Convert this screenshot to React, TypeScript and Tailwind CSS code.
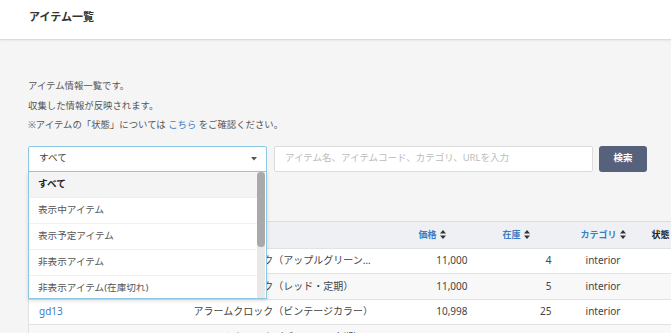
import React from "react";

const font = { fontFamily: '"Noto Sans", "Noto Sans CJK JP", sans-serif' };

const options = [
  "すべて",
  "表示中アイテム",
  "表示予定アイテム",
  "非表示アイテム",
  "非表示アイテム(在庫切れ)",
];

const rows = [
  { code: "gd11", name: "アラームクロック（アップルグリーン・定期）", price: "11,000", stock: 4, category: "interior" },
  { code: "gd12", name: "アラームクロック（レッド・定期）", price: "11,000", stock: 5, category: "interior" },
  { code: "gd13", name: "アラームクロック（ビンテージカラー）", price: "10,998", stock: 25, category: "interior" },
  { code: "gd14", name: "アラームクロック（ゴールド・定期）", price: "11,000", stock: 3, category: "interior" },
];

function SortIcon() {
  return (
    <svg width="6" height="9" viewBox="0 0 6 9" className="inline-block ml-[3px] -mt-[1px]">
      <path d="M3 0 L6 3.6 L0 3.6 Z" fill="#333" />
      <path d="M3 9 L6 5.4 L0 5.4 Z" fill="#333" />
    </svg>
  );
}

export default function App() {
  return (
    <div className="min-h-[333px] bg-[#f5f5f5] text-[#555]" style={font}>
      {/* Header */}
      <header className="h-[40px] bg-white border-b border-[#dcdcdc] shadow-[0_1px_2px_rgba(0,0,0,0.06)] flex items-center px-[29px]">
        <h1 className="text-[11px] font-bold text-[#333] -mt-[4px]">アイテム一覧</h1>
      </header>

      <div className="pt-[36px] pl-[28px]">
        {/* Intro */}
        <div className="text-[9.4px] leading-[19.5px]">
          <p>アイテム情報一覧です。</p>
          <p>収集した情報が反映されます。</p>
          <p>
            ※アイテムの「状態」については <span className="text-[#3b7dc4]">こちら</span> をご確認ください。
          </p>
        </div>

        {/* Search row */}
        <div className="mt-[11px] flex items-center gap-[7px]">
          <div className="relative w-[239px]">
            <div className="h-[26px] bg-white border border-[#8cc8e3] rounded-t-[2px] flex items-center justify-between pl-[10px] pr-[9px] text-[9.6px] text-[#444]">
              <span>すべて</span>
              <svg width="6" height="4" viewBox="0 0 6 4">
                <path d="M0 0 L6 0 L3 3.5 Z" fill="#555" />
              </svg>
            </div>
            {/* Dropdown menu */}
            <div className="absolute left-0 top-[25px] z-10 w-[239px] h-[128px] bg-white border border-[#8cc8e3] shadow-[0_2px_4px_rgba(0,0,0,0.12)] flex overflow-hidden">
              <ul className="flex-1 overflow-hidden">
                {options.map((o, i) => (
                  <li
                    key={o}
                    className={
                      "h-[26px] flex items-center pl-[9px] text-[9.6px] border-b border-[#f0f0f0] " +
                      (i === 0 ? "bg-[#f4f4f4] font-bold text-[#222]" : "text-[#555]")
                    }
                  >
                    {o}
                  </li>
                ))}
              </ul>
              <div className="w-[8px] bg-[#e8e8e8] mr-[1px]">
                <div className="h-[75px] bg-[#a9a9a9] rounded-[4px]" />
              </div>
            </div>
          </div>
          <div className="w-[319px] h-[26px] bg-white border border-[#dcdcdc] rounded-[2px] flex items-center pl-[10px] text-[9.5px] text-[#bbb]">
            アイテム名、アイテムコード、カテゴリ、URLを入力
          </div>
          <button className="-ml-[1px] w-[48px] h-[26px] bg-[#56627c] rounded-[3px] text-white text-[9.5px] font-bold">
            検索
          </button>
        </div>

        {/* Table */}
        <div className="mt-[49px] overflow-hidden">
          <table className="table-fixed border-collapse w-[672px] text-[10px] text-[#444]">
            <colgroup>
              <col className="w-[155px]" />
              <col className="w-[217px]" />
              <col className="w-[80px]" />
              <col className="w-[85px]" />
              <col className="w-[75px]" />
              <col className="w-[60px]" />
            </colgroup>
            <thead>
              <tr className="h-[27px] bg-[#eef0f3] border-t border-l border-[#dcdcdc] text-[9px] font-bold">
                <th className="text-left pl-[10px] text-[#333]">アイテムコード</th>
                <th className="text-left pl-[10px] text-[#333]">アイテム名</th>
                <th className="text-left pl-[18px] text-[#3b7dc4] font-bold">
                  価格<SortIcon />
                </th>
                <th className="text-left pl-[22px] text-[#3b7dc4] font-bold">
                  在庫<SortIcon />
                </th>
                <th className="text-center text-[#3b7dc4] font-bold">
                  カテゴリ<SortIcon />
                </th>
                <th className="text-left pl-[11px] text-[#222] font-bold">状態</th>
              </tr>
            </thead>
            <tbody>
              {rows.map((r, i) => (
                <tr
                  key={r.code}
                  className={
                    "h-[25.5px] border-t border-l border-[#e2e2e2] " + (i % 2 === 1 ? "bg-[#f8f8f8]" : "bg-white")
                  }
                >
                  <td className="pl-[10px] text-[#3b7dc4]">{r.code}</td>
                  <td className="pl-[10px] pr-[20px] truncate">{r.name}</td>
                  <td className="text-right pr-[13px]">{r.price}</td>
                  <td className="text-right pr-[14px]">{r.stock}</td>
                  <td className="text-center">{r.category}</td>
                  <td />
                </tr>
              ))}
            </tbody>
          </table>
        </div>
      </div>
    </div>
  );
}
